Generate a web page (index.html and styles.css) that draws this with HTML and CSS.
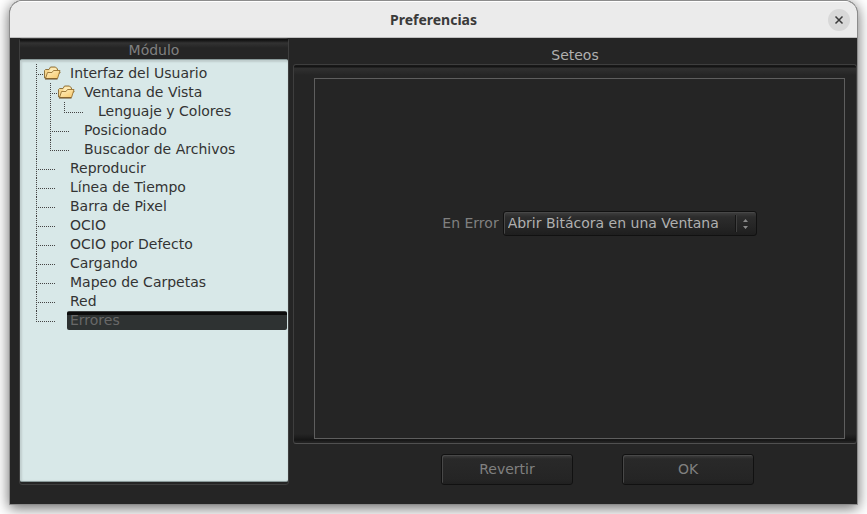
FILE: index.html
```html
<!DOCTYPE html>
<html lang="es">
<head>
<meta charset="utf-8">
<title>Preferencias</title>
<link rel="stylesheet" href="styles.css">
</head>
<body>
<svg class="defs" width="0" height="0" aria-hidden="true">
  <linearGradient id="folder-fill" x1="0" y1="0" x2="1" y2="1">
    <stop offset="0" stop-color="#fff0c4"/>
    <stop offset="1" stop-color="#f8c868"/>
  </linearGradient>
  <symbol id="folder" viewBox="0 0 17 14">
    <path d="M.5 12V4.500l1-1H5l1.500-2.500h5l2 2v3H16v1z" fill="#f6d68e" stroke="#8f7440"/>
    <path d="M7 2h4.500l1 1.500V6H5.500V4z" fill="#fdeab4"/>
    <path d="M1.500 12.500L3.500 6.500h4.500l1.500-2h6.500l-2.500 8z" fill="url(#folder-fill)" stroke="#a07c3c"/>
    <path d="M1 13h12.500" stroke="#6b4a20"/>
  </symbol>
</svg>
<div class="window">
  <header class="titlebar">
    <h1 class="title">Preferencias</h1>
    <button class="close" type="button" aria-label="Cerrar">
      <svg width="10" height="10" viewBox="0 0 10 10"><path d="M1.500 1.500l7 7M8.500 1.500l-7 7" stroke="#3a3a3a" stroke-width="1.500"/></svg>
    </button>
  </header>
  <main class="content">
    <nav class="modules">
      <h2 class="modules-title">Módulo</h2>
      <ul class="tree">
        <li>
          <div class="row parent"><svg class="folder"><use href="#folder"/></svg><a href="#">Interfaz del Usuario</a></div>
          <ul>
            <li>
              <div class="row parent"><svg class="folder"><use href="#folder"/></svg><a href="#">Ventana de Vista</a></div>
              <ul>
                <li><div class="row"><a href="#">Lenguaje y Colores</a></div></li>
              </ul>
            </li>
            <li><div class="row"><a href="#">Posicionado</a></div></li>
            <li><div class="row"><a href="#">Buscador de Archivos</a></div></li>
          </ul>
        </li>
        <li><div class="row"><a href="#">Reproducir</a></div></li>
        <li><div class="row"><a href="#">Línea de Tiempo</a></div></li>
        <li><div class="row"><a href="#">Barra de Pixel</a></div></li>
        <li><div class="row"><a href="#">OCIO</a></div></li>
        <li><div class="row"><a href="#">OCIO por Defecto</a></div></li>
        <li><div class="row"><a href="#">Cargando</a></div></li>
        <li><div class="row"><a href="#">Mapeo de Carpetas</a></div></li>
        <li><div class="row"><a href="#">Red</a></div></li>
        <li><div class="row"><a class="selected" href="#" aria-current="true">Errores</a></div></li>
      </ul>
    </nav>
    <section class="settings">
      <h2 class="settings-title">Seteos</h2>
      <div class="pane">
        <div class="group">
          <label for="on-error">En Error</label>
          <div class="choice">
            <select id="on-error"><option>Abrir Bitácora en una Ventana</option></select>
            <svg class="arrows" width="7" height="12" viewBox="0 0 7 12"><path d="M3.500 1L6 4H1zM3.500 11L1 8h5z" fill="#8a8a8a"/></svg>
          </div>
        </div>
      </div>
      <div class="actions">
        <button class="btn" type="button">Revertir</button>
        <button class="btn" type="button">OK</button>
      </div>
    </section>
  </main>
</div>
</body>
</html>
```
FILE: styles.css
```css
* {
  box-sizing: border-box;
}

body {
  margin: 0;
  height: 100vh;
  padding: 0 9px 9px;
  overflow: hidden;
  background: #fff;
  font: 14px/19px "DejaVu Sans", sans-serif;
  color: #333;
}

h1,
h2,
ul {
  margin: 0;
  padding: 0;
  font-weight: normal;
  list-style: none;
}

.defs {
  position: absolute;
}

.window {
  display: flex;
  flex-direction: column;
  height: 100%;
  border: 1px solid #8c8c8c;
  border-radius: 13px 13px 0 0;
  background: #252525;
  box-shadow: 0 3px 14px rgba(0, 0, 0, 0.6);
  overflow: hidden;
}

.titlebar {
  display: grid;
  grid-template-columns: 1fr auto 1fr;
  align-items: center;
  height: 37px;
  flex: none;
  padding: 0 7px;
  background: #ebebeb;
  border-top: 1px solid #fff;
  border-bottom: 1px solid #bfbfbf;
}

.title {
  grid-column: 2;
  font: bold 14px/20px "Noto Sans", sans-serif;
  color: #3a3a3a;
}

.close {
  justify-self: end;
  display: flex;
  align-items: center;
  justify-content: center;
  width: 22px;
  height: 22px;
  padding: 0;
  border: 0;
  border-radius: 50%;
  background: #d8d8d8;
}

.content {
  flex: 1;
  display: grid;
  grid-template-columns: 270px 1fr;
  gap: 4px;
  min-height: 0;
  padding: 0 0 19px 9px;
}

.modules {
  display: flex;
  flex-direction: column;
  border: 1px solid #3e3e3e;
  border-radius: 3px;
}

.modules-title {
  flex: none;
  height: 20px;
  padding-top: 2px;
  font-size: 14px;
  text-align: center;
  color: #808080;
  background: linear-gradient(#0c0c0c, #1b1b1b 2px, #323232 4px, #252525 9px);
}

.tree {
  flex: 1;
  margin-bottom: 2px;
  padding: 4px 0 0 16px;
  border: 1px solid #8a9a9a;
  border-width: 1px 0;
  border-radius: 2px;
  background: #d8e8e8;
  box-shadow: inset 0 2px 2px #becccc, inset 2px 0 2px #c2cfcf;
}

.tree li {
  background: repeating-linear-gradient(#444 0 1px, transparent 1px 2px) 0 0 / 1px 100% no-repeat;
}

.tree li:last-child {
  background-size: 1px 11px;
}

.tree ul {
  margin-left: 14px;
}

.row {
  display: flex;
  height: 19px;
}

.row::before {
  content: "";
  flex: none;
  width: 19px;
  height: 1px;
  margin: 10px 12px 0 0;
  background: repeating-linear-gradient(90deg, #444 0 1px, transparent 1px 2px);
}

.row.parent::before {
  width: 8px;
  margin-right: 0;
}

.folder {
  flex: none;
  width: 17px;
  height: 14px;
  margin: 2px 6px 0 0;
}

.row a {
  flex: 1;
  margin-right: 1px;
  padding-left: 3px;
  color: #333;
  text-decoration: none;
}

.row .selected {
  color: #686868;
  border-radius: 2px;
  background: linear-gradient(#3d4040 1px, #0c0c0c 1px 4px, #2e3232 4px);
}

.settings {
  display: flex;
  flex-direction: column;
}

.settings-title {
  height: 26px;
  padding-top: 8px;
  font-size: 14px;
  text-align: center;
  color: #b0b0b0;
}

.pane {
  flex: 1;
  display: flex;
  padding: 13px 11px 4px 20px;
  border: 1px solid #3e3e3e;
  border-bottom-color: #505050;
  border-radius: 3px;
  background:
    linear-gradient(#1a1a1a, #121212 2px, #303030 3px, #2e2e2e 5px, #252525 10px) top / 100% 10px no-repeat,
    linear-gradient(#252525, #151515 6px, #222 8px) bottom / 100% 9px no-repeat;
}

.group {
  flex: 1;
  display: flex;
  align-items: center;
  justify-content: center;
  gap: 4px;
  padding: 0 0 71px 40px;
  border: 1px solid #5e5e5e;
  background: #252525;
  color: #808080;
}

.choice {
  position: relative;
}

.choice select {
  appearance: none;
  display: block;
  height: 25px;
  padding: 0 36px 0 4px;
  border: 1px solid #111;
  border-radius: 3px;
  background:
    linear-gradient(#151515, #151515) right 20px center / 1px 17px no-repeat,
    linear-gradient(#404040, #404040) right 19px center / 1px 17px no-repeat,
    linear-gradient(#404040, #2c2c2c 5px, #252525 15px, #1e1e1e);
  font: inherit;
  color: #b0b0b0;
  box-shadow: inset 1px 1px #484848;
}

.arrows {
  position: absolute;
  right: 8px;
  top: 7px;
  pointer-events: none;
}

.actions {
  display: flex;
  justify-content: center;
  gap: 49px;
  padding: 10px 0 0 45px;
}

.btn {
  width: 132px;
  height: 31px;
  padding: 0;
  border: 1px solid #111;
  border-radius: 3px;
  background: linear-gradient(#3e3e3e, #292929 4px, #252525 24px, #202020);
  box-shadow: inset 1px 1px #484848;
  font: inherit;
  color: #808080;
}
```
